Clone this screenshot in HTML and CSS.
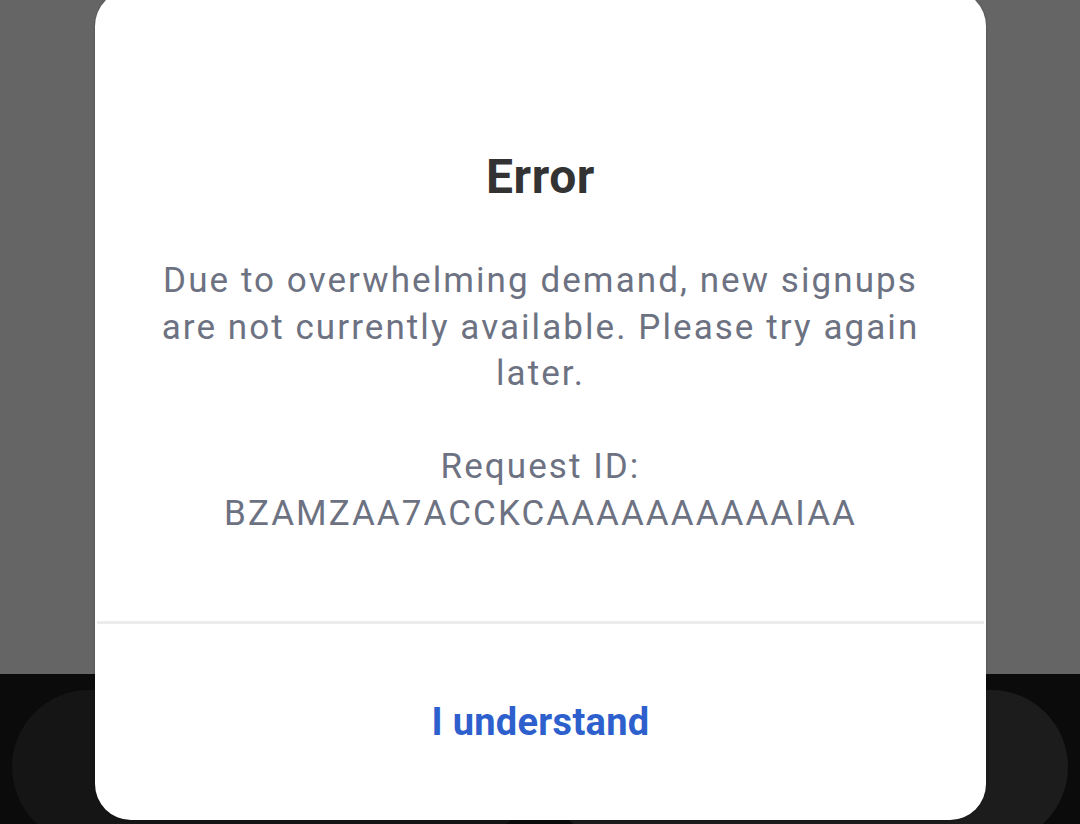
FILE: index.html
```html
<!DOCTYPE html>
<html lang="en">
<head>
    <meta charset="UTF-8">
    <meta name="viewport" content="width=device-width, initial-scale=1.0">
    <title>Error</title>
    <link rel="stylesheet" href="styles.css">
</head>
<body>
    <div class="backdrop"></div>

    <div class="bottom-bar">
        <div class="pill pill-left"></div>
        <div class="pill pill-right"></div>
    </div>

    <div class="dialog" role="alertdialog">
        <div class="dialog-body">
            <h1 class="dialog-title">Error</h1>
            <p class="dialog-text">Due to overwhelming demand, new signups are not currently available. Please try again later.</p>
            <p class="dialog-text request-id">Request ID: BZAMZAA7ACCKCAAAAAAAAAAIAA</p>
        </div>
        <div class="dialog-actions">
            <button class="action-btn" type="button">I understand</button>
        </div>
    </div>
</body>
</html>
```

FILE: styles.css
```css
* {
    margin: 0;
    padding: 0;
    box-sizing: border-box;
}

html, body {
    width: 1080px;
    height: 824px;
    overflow: hidden;
}

body {
    font-family: Roboto, 'Noto Sans', 'Liberation Sans', sans-serif;
    background: #0b0b0b;
    display: flex;
    flex-direction: column;
    position: relative;
}

.backdrop {
    flex: 0 0 674px;
    background: #656565;
}

.bottom-bar {
    flex: 1;
    display: flex;
    justify-content: space-between;
    padding: 16px 12px 0;
    overflow: hidden;
}

.pill {
    flex: 0 0 520px;
    height: 154px;
    border-radius: 77px;
}

.pill-left {
    background: #151516;
}

.pill-right {
    background: #1c1c1d;
}

/* dialog sits over the page */
.dialog {
    position: absolute;
    left: 95px;
    top: -10px;
    width: 891px;
    height: 830px;
    background: #fff;
    border-radius: 36px;
    box-shadow: 0 0 0 1px rgba(0, 0, 0, 0.04), 0 0 3px rgba(0, 0, 0, 0.12);
    display: flex;
    flex-direction: column;
    overflow: hidden;
}

.dialog-body {
    flex: 0 0 634px;
    padding: 159px 60px 0;
    text-align: center;
    border-bottom: 3px solid #ececee;
    margin: 0 2px;
}

.dialog-title {
    font-size: 48px;
    line-height: 56px;
    font-weight: 700;
    letter-spacing: 0.6px;
    color: #333333;
    margin-bottom: 53px;
}

.dialog-text {
    font-size: 35px;
    line-height: 46.5px;
    letter-spacing: 2.07px;
    color: #6d7282;
}

.request-id {
    margin-top: 46.5px;
}

.dialog-actions {
    flex: 1;
    display: flex;
    align-items: center;
    justify-content: center;
}

.action-btn {
    background: none;
    border: none;
    font-family: inherit;
    font-size: 38px;
    font-weight: 700;
    letter-spacing: 0.3px;
    color: #2d5fcd;
    cursor: pointer;
    padding: 0 20px;
}
```
